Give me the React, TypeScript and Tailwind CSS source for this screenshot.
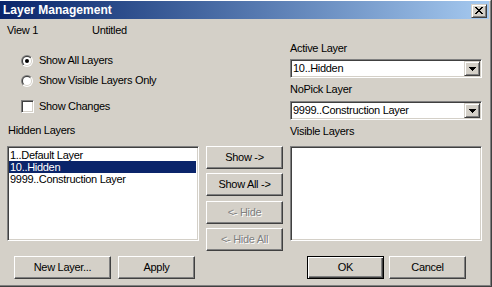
import React from 'react'

const raised =
  'border border-t-white border-l-white border-r-[#404040] border-b-[#404040] shadow-[inset_-1px_-1px_0_#808080]'
const raisedSmall =
  'border border-t-[#d4d0c8] border-l-[#d4d0c8] border-r-[#404040] border-b-[#404040] shadow-[inset_1px_1px_0_#fff,inset_-1px_-1px_0_#808080]'
const sunken =
  'border border-t-[#808080] border-l-[#808080] border-r-white border-b-white shadow-[inset_1px_1px_0_#404040,inset_-1px_-1px_0_#d4d0c8]'

function Button({
  label,
  width,
  disabled,
  isDefault,
}: {
  label: string
  width: string
  disabled?: boolean
  isDefault?: boolean
}) {
  const frame = isDefault
    ? 'border border-black shadow-[inset_1px_1px_0_#fff,inset_-1px_-1px_0_#404040,inset_-2px_-2px_0_#808080]'
    : raised
  return (
    <div className={`${width} h-[23px] flex items-center justify-center bg-[#d4d0c8] ${frame}`}>
      <span className={disabled ? 'text-[#808080] [text-shadow:1px_1px_0_#fff]' : ''}>{label}</span>
    </div>
  )
}

function Radio({ checked }: { checked?: boolean }) {
  return (
    <svg width="12" height="12" viewBox="0 0 12 12" className="shrink-0">
      <defs>
        <linearGradient id="ro" x1="0" y1="0" x2="1" y2="1">
          <stop offset="0.5" stopColor="#808080" />
          <stop offset="0.5" stopColor="#ffffff" />
        </linearGradient>
        <linearGradient id="ri" x1="0" y1="0" x2="1" y2="1">
          <stop offset="0.5" stopColor="#404040" />
          <stop offset="0.5" stopColor="#d4d0c8" />
        </linearGradient>
      </defs>
      <circle cx="6" cy="6" r="6" fill="url(#ro)" />
      <circle cx="6" cy="6" r="5" fill="url(#ri)" />
      <circle cx="6" cy="6" r="4" fill="#fff" />
      {checked && <circle cx="6" cy="6" r="2" fill="#000" />}
    </svg>
  )
}

function Combo({ value }: { value: string }) {
  return (
    <div className={`h-[19px] w-[192px] bg-white flex ${sunken} p-[1px]`}>
      <div className="flex-1 flex items-center pl-[1px]">{value}</div>
      <div className={`w-[16px] h-full flex items-center justify-center bg-[#d4d0c8] ${raisedSmall}`}>
        <svg width="7" height="4" viewBox="0 0 7 4" shapeRendering="crispEdges">
          <path d="M0 0h7v1h-1v1h-1v1h-1v1h-1v-1h-1v-1h-1v-1h-1z" fill="#000" />
        </svg>
      </div>
    </div>
  )
}

const hiddenLayers = ['1..Default Layer', '10..Hidden', '9999..Construction Layer']

export default function App() {
  return (
    <div className="w-[492px] h-[287px] bg-[#d4d0c8] border-r border-b border-r-[#404040] border-b-[#404040] font-['Liberation_Sans',Arial,sans-serif] text-[11px] leading-[13px] text-black">
      <div className="h-full flex flex-col border-t border-t-white border-r border-b border-r-[#808080] border-b-[#808080] pr-[1px]">
        {/* title bar */}
        <div className="h-[18px] flex items-center justify-between pl-[3px] pr-[2px] bg-linear-to-r from-[#0a246a] to-[#a6caf0]">
          <span className="text-white font-bold text-[12px]">Layer Management</span>
          <div className={`w-[16px] h-[14px] mt-[1px] flex items-center justify-center bg-[#d4d0c8] ${raisedSmall}`}>
            <svg width="8" height="7" viewBox="0 0 8 7" shapeRendering="crispEdges">
              <path
                d="M0 0h2v1h1v1h2v-1h1v-1h2v1h-1v1h-1v1h-1v1h1v1h1v1h1v1h-2v-1h-1v-1h-2v1h-1v1h-2v-1h1v-1h1v-1h1v-1h-1v-1h-1v-1h-1z"
                fill="#000"
              />
            </svg>
          </div>
        </div>

        <div className="flex-1 flex flex-col pl-[7px] tracking-[-0.3px]">
          <div className="flex">
            {/* left column */}
            <div className="w-[283px] flex flex-col">
              <div className="mt-[5px] flex">
                <span className="w-[85px]">View 1</span>
                <span>Untitled</span>
              </div>
              <div className="mt-[17px] ml-[14px] h-[13px] flex items-center gap-[6px]">
                <Radio checked />
                <span>Show All Layers</span>
              </div>
              <div className="mt-[7px] ml-[14px] h-[13px] flex items-center gap-[6px]">
                <Radio />
                <span>Show Visible Layers Only</span>
              </div>
              <div className="mt-[13px] ml-[14px] h-[13px] flex items-center gap-[5px]">
                <div className={`w-[13px] h-[13px] bg-white ${sunken}`} />
                <span>Show Changes</span>
              </div>
            </div>

            {/* right column */}
            <div className="w-[192px] flex flex-col">
              <div className="mt-[23px]">Active Layer</div>
              <div className="mt-[4px]">
                <Combo value="10..Hidden" />
              </div>
              <div className="mt-[5px]">NoPick Layer</div>
              <div className="mt-[5px]">
                <Combo value="9999..Construction Layer" />
              </div>
            </div>
          </div>

          <div className="mt-[4px] flex">
            <span className="w-[283px] pl-[1px]">Hidden Layers</span>
            <span className="mt-[1px]">Visible Layers</span>
          </div>

          <div className="mt-[8px] flex items-start">
            <div className={`w-[192px] h-[95px] bg-white ${sunken} pt-[2px] pl-[1px] pr-[2px]`}>
              {hiddenLayers.map((l, i) => (
                <div
                  key={l}
                  className={`h-[12px] leading-[12px] pl-[1px] ${i === 1 ? 'bg-[#0a246a] text-white' : ''}`}
                >
                  {l}
                </div>
              ))}
            </div>
            <div className="ml-[7px] w-[77px] flex flex-col">
              <Button label="Show ->" width="w-[77px]" />
              <div className="mt-[4px]">
                <Button label="Show All ->" width="w-[77px]" />
              </div>
              <div className="mt-[5px]">
                <Button label="<- Hide" width="w-[77px]" disabled />
              </div>
              <div className="mt-[4px]">
                <Button label="<- Hide All" width="w-[77px]" disabled />
              </div>
            </div>
            <div className={`ml-[7px] w-[192px] h-[95px] bg-white ${sunken}`} />
          </div>

          <div className="mt-[5px] flex">
            <div className="ml-[7px]">
              <Button label="New Layer..." width="w-[97px]" />
            </div>
            <div className="ml-[7px]">
              <Button label="Apply" width="w-[77px]" />
            </div>
            <div className="ml-[112px]">
              <Button label="OK" width="w-[77px]" isDefault />
            </div>
            <div className="ml-[5px]">
              <Button label="Cancel" width="w-[77px]" />
            </div>
          </div>
        </div>
      </div>
    </div>
  )
}
